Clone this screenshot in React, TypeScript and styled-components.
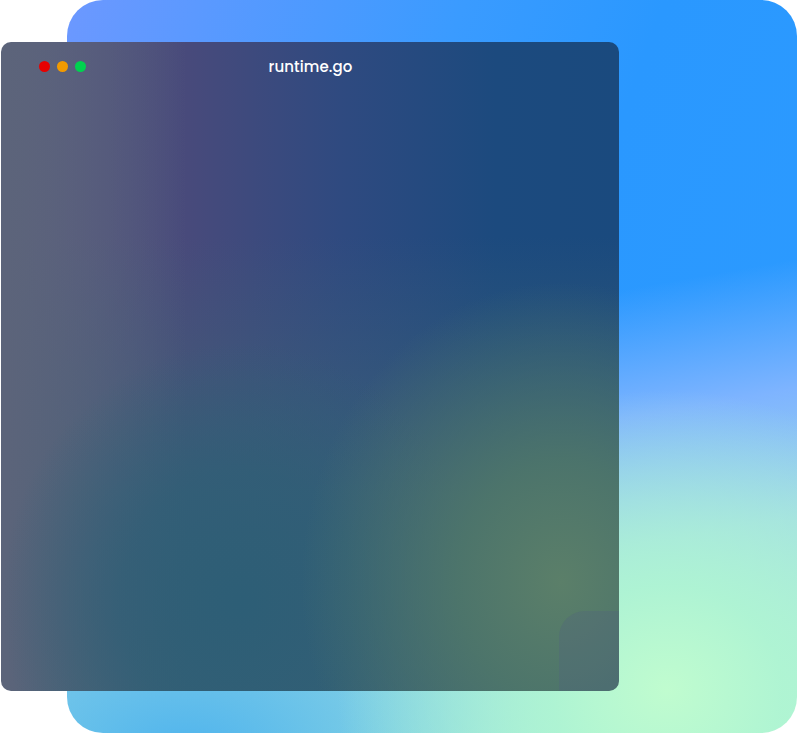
import React from "react";
import styled, { createGlobalStyle } from "styled-components";

const Global = createGlobalStyle`
  html, body { margin: 0; padding: 0; background: #fff; }
  body { font-family: Poppins, "Open Sans", "Liberation Sans", sans-serif; }
`;

const Stage = styled.div`
  position: relative;
  width: 797px;
  height: 733px;
  overflow: hidden;
`;

const Backdrop = styled.div`
  margin-left: 67px;
  width: 730px;
  height: 733px;
  border-radius: 36px;
  background:
    radial-gradient(ellipse 330px 300px at 600px 690px, #c0fccf 0%, rgba(175,245,210,0.9) 35%, rgba(140,220,225,0) 100%),
    radial-gradient(ellipse 420px 260px at 120px 760px, #4cb2ee 0%, rgba(76,178,238,0) 100%),
    linear-gradient(170deg, rgba(43,154,255,0) 45%, #7eb4ff 60%, #9fd8e8 75%, #b5f5d5 100%),
    linear-gradient(110deg, #6c98ff 0%, #3a9bff 40%, #2a98ff 60%, #2c9bff 100%);
`;

const Window = styled.div`
  position: absolute;
  left: 1px;
  top: 42px;
  width: 618px;
  height: 649px;
  border-radius: 10px;
  overflow: hidden;
  background:
    radial-gradient(ellipse 260px 300px at 560px 540px, #5b7f69 0%, rgba(80,120,105,0.85) 40%, rgba(70,110,110,0) 100%),
    radial-gradient(ellipse 240px 260px at 240px 560px, #2d5e76 0%, rgba(45,94,118,0.7) 50%, rgba(45,94,118,0) 100%),
    linear-gradient(90deg, rgba(92,100,122,1) 0%, rgba(92,100,122,0) 30%),
    linear-gradient(180deg, rgba(60,90,120,0) 30%, rgba(62,98,118,0.8) 70%, rgba(60,100,115,0.9) 100%),
    linear-gradient(90deg, #5c6182 0%, #484a7b 30%, #2f4a80 55%, #1c4a7e 80%, #1a4a7e 100%);
  display: flex;
  flex-direction: column;
`;

const TitleBar = styled.div`
  position: relative;
  height: 48px;
  display: flex;
  align-items: center;
  justify-content: center;
`;

const Dots = styled.div`
  position: absolute;
  left: 38px;
  top: 19px;
  display: flex;
  gap: 7px;
`;

const Dot = styled.span<{ $c: string }>`
  width: 11px;
  height: 11px;
  border-radius: 50%;
  background: ${(p) => p.$c};
`;

const Title = styled.span`
  color: #fff;
  font-size: 15px;
  font-weight: 500;
  letter-spacing: 0.1px;
  margin-left: 1px;
`;

const Blob = styled.div`
  position: absolute;
  right: 0;
  bottom: 0;
  width: 60px;
  height: 80px;
  border-radius: 26px 0 10px 0;
  background: rgba(80, 90, 130, 0.25);
`;

export default function App() {
  return (
    <Stage>
      <Global />
      <Backdrop />
      <Window>
        <TitleBar>
          <Dots>
            <Dot $c="#e60000" />
            <Dot $c="#f29a00" />
            <Dot $c="#00d24f" />
          </Dots>
          <Title>runtime.go</Title>
        </TitleBar>
        <Blob />
      </Window>
    </Stage>
  );
}
